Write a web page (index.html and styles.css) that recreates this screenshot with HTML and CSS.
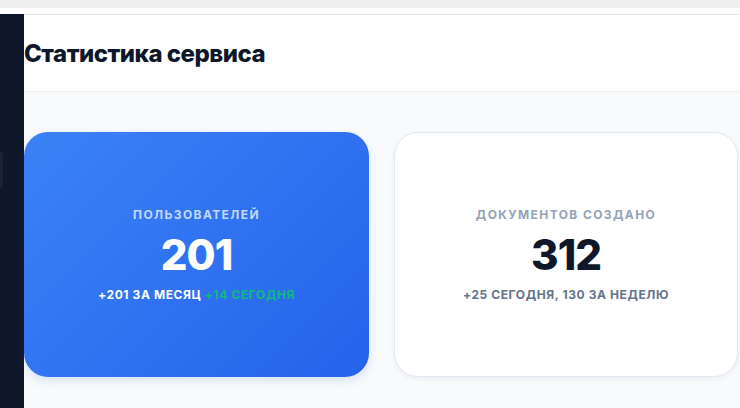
FILE: index.html
```html
<!DOCTYPE html>
<html lang="ru">
<head>
<meta charset="utf-8">
<title>Статистика сервиса</title>
<link rel="stylesheet" href="styles.css">
</head>
<body>
<div class="topbar"></div>
<div class="gap"></div>
<div class="app">
  <aside class="sidebar">
    <div class="nav-item"></div>
  </aside>
  <main class="main">
    <header class="header">
      <h1 class="title">Статистика сервиса</h1>
    </header>
    <section class="content">
      <div class="cards">
        <div class="card card-primary">
          <div class="label">Пользователей</div>
          <div class="value">201</div>
          <div class="sub">+201 за месяц <span class="green">+14 сегодня</span></div>
        </div>
        <div class="card card-plain">
          <div class="label">Документов создано</div>
          <div class="value">312</div>
          <div class="sub">+25 сегодня, 130 за неделю</div>
        </div>
      </div>
    </section>
  </main>
</div>
</body>
</html>
```
FILE: styles.css
```css
* { box-sizing: border-box; }
html, body { margin: 0; padding: 0; height: 100%; }
body {
  font-family: Inter, "Noto Sans", sans-serif;
  background: #ffffff;
  overflow: hidden;
  display: flex;
  flex-direction: column;
}
.topbar { height: 8px; background: #efefef; flex: none; }
.gap { height: 6px; background: #ffffff; flex: none; }
.app { flex: 1; display: flex; min-height: 0; }
.sidebar {
  width: 24px;
  flex: none;
  background: #0f172a;
  padding-top: 138px;
}
.nav-item {
  width: 3px;
  height: 36px;
  background: #1a2336;
  border-radius: 0 6px 6px 0;
}
.main { flex: 1; display: flex; flex-direction: column; min-width: 0; }
.header {
  height: 78px;
  flex: none;
  border-top: 1px solid #e5e7eb;
  border-bottom: 1px solid #eef0f3;
  background: #ffffff;
  display: flex;
  align-items: center;
}
.title {
  margin: 0;
  font-size: 24px;
  font-weight: 800;
  color: #0f172a;
  letter-spacing: -0.5px;
}
.content {
  flex: 1;
  background: #f8fafc;
  padding: 40px 2px 0 0;
}
.cards {
  display: grid;
  grid-template-columns: 345px 344px;
  gap: 25px;
}
.card {
  height: 245px;
  border-radius: 24px;
  display: flex;
  flex-direction: column;
  align-items: center;
  justify-content: center;
  text-align: center;
}
.card-primary {
  background: linear-gradient(135deg, #3b82f6 0%, #2563eb 100%);
  box-shadow: 0 4px 10px rgba(37, 99, 235, 0.15);
}
.card-plain {
  background: #ffffff;
  border: 1px solid #e2e8f0;
  box-shadow: 0 2px 6px rgba(15, 23, 42, 0.05);
}
.label {
  font-size: 12px;
  font-weight: 700;
  letter-spacing: 1.4px;
  text-transform: uppercase;
  line-height: 16px;
}
.value {
  font-size: 42px;
  font-weight: 800;
  line-height: 48px;
  margin-top: 8px;
  letter-spacing: -1px;
}
.sub {
  font-size: 12px;
  font-weight: 700;
  text-transform: uppercase;
  letter-spacing: 0.6px;
  line-height: 16px;
  margin-top: 8px;
}
.card-primary .label { color: rgba(255, 255, 255, 0.72); }
.card-primary .value { color: #ffffff; }
.card-primary .sub { color: #ffffff; }
.green { color: #10b981; }
.card-plain .label { color: #94a3b8; }
.card-plain .value { color: #0f172a; }
.card-plain .sub { color: #64748b; }
```
